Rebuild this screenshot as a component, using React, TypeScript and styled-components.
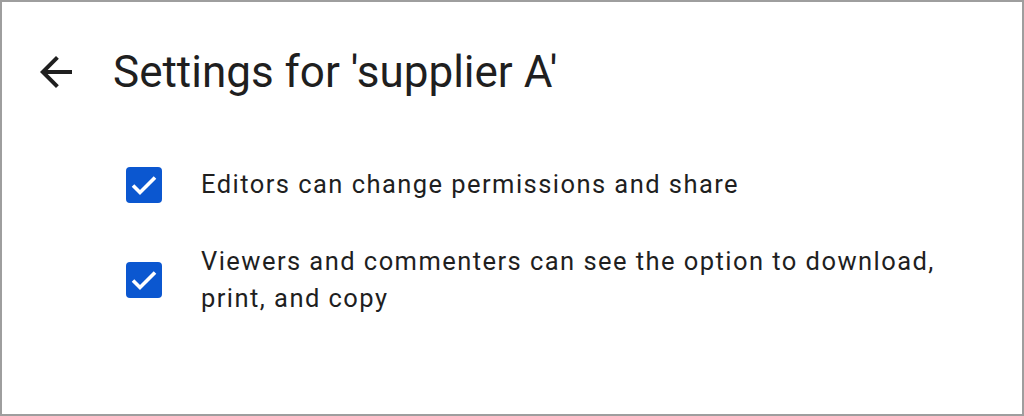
import styled, { createGlobalStyle } from 'styled-components';

const Global = createGlobalStyle`
  html, body {
    margin: 0;
    padding: 0;
    background: #ffffff;
  }
  body {
    font-family: Roboto, "Noto Sans", Arial, sans-serif;
    color: #1f1f1f;
  }
`;

const Frame = styled.div`
  box-sizing: border-box;
  width: 1024px;
  height: 416px;
  border: 2px solid #9e9e9e;
  background: #ffffff;
  padding: 46px 30px 0 30px;
`;

const Header = styled.div`
  display: flex;
  align-items: center;
  gap: 33px;
  height: 48px;
`;

const BackButton = styled.button`
  width: 48px;
  height: 48px;
  padding: 0;
  border: none;
  background: transparent;
  display: flex;
  align-items: center;
  justify-content: center;
  cursor: pointer;
  color: #1f1f1f;
`;

const Title = styled.h1`
  margin: 0;
  font-size: 44px;
  font-weight: 400;
  color: #1f1f1f;
  letter-spacing: 0;
`;

const Options = styled.div`
  display: flex;
  flex-direction: column;
  gap: 40px;
  margin-top: 70px;
  padding-left: 94px;
`;

const Option = styled.label`
  display: flex;
  align-items: center;
  gap: 39px;
  cursor: pointer;
`;

const Box = styled.span<{ $checked: boolean }>`
  flex: none;
  width: 36px;
  height: 36px;
  border-radius: 4px;
  background: ${(p) => (p.$checked ? '#0b57d0' : 'transparent')};
  border: ${(p) => (p.$checked ? 'none' : '2px solid #444746')};
  display: flex;
  align-items: center;
  justify-content: center;
`;

const Text = styled.span`
  font-size: 25.5px;
  line-height: 37px;
  letter-spacing: 1.45px;
  color: #1f1f1f;
  max-width: 770px;
`;

function Check() {
  return (
    <svg width="36" height="36" viewBox="0 0 36 36">
      <path d="M7 18.5l7 7 15-15" fill="none" stroke="#ffffff" strokeWidth="3.6" />
    </svg>
  );
}

function ArrowBack() {
  return (
    <svg width="48" height="48" viewBox="0 0 24 24" fill="currentColor">
      <path d="M20 11H7.83l5.59-5.59L12 4l-8 8 8 8 1.41-1.41L7.83 13H20v-2z" />
    </svg>
  );
}

const options = [
  'Editors can change permissions and share',
  'Viewers and commenters can see the option to download, print, and copy',
];

export default function App() {
  return (
    <>
      <Global />
      <Frame>
        <Header>
          <BackButton aria-label="Back">
            <ArrowBack />
          </BackButton>
          <Title>Settings for 'supplier A'</Title>
        </Header>
        <Options>
          {options.map((o) => (
            <Option key={o}>
              <Box $checked>
                <Check />
              </Box>
              <Text>{o}</Text>
            </Option>
          ))}
        </Options>
      </Frame>
    </>
  );
}
